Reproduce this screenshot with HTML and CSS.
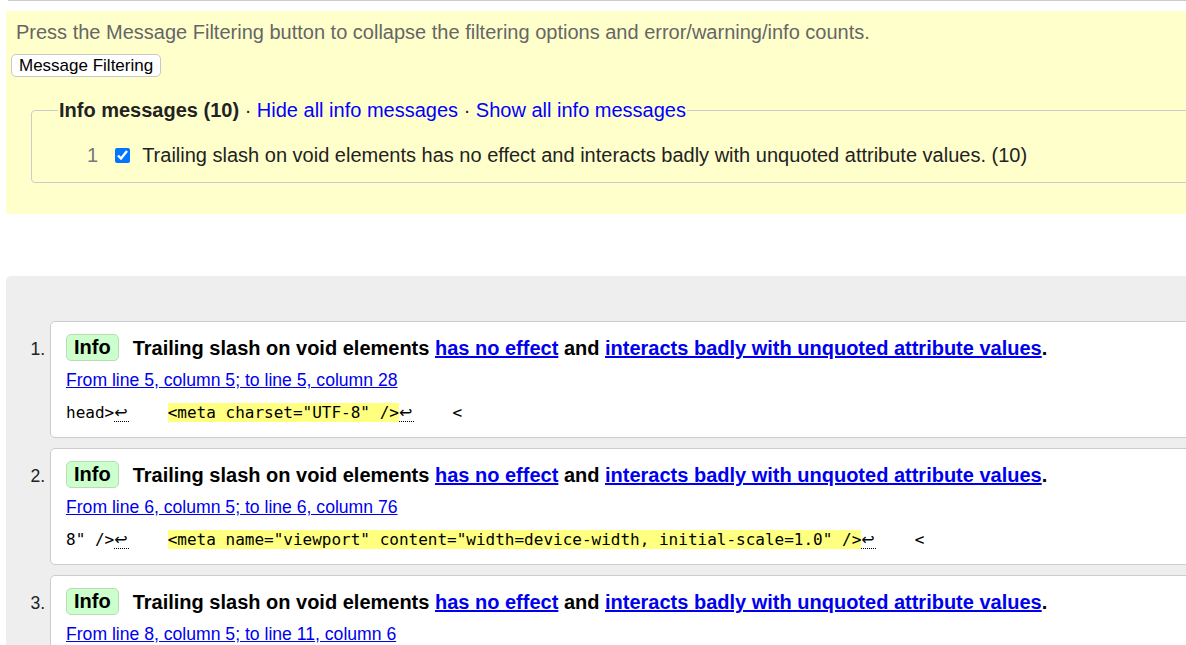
FILE: index.html
```html
<!DOCTYPE html>
<html lang="en">
<head>
<meta charset="utf-8">
<title>Nu Html Checker</title>
<link rel="stylesheet" href="styles.css">
</head>
<body>
<div class="page">
  <div class="topline"></div>
  <section class="filters">
    <p class="hint">Press the Message Filtering button to collapse the filtering options and error/warning/info counts.</p>
    <button class="filter-btn" type="button">Message Filtering</button>
    <fieldset class="group">
      <legend class="group-legend"><strong>Info messages (10)</strong> · <a href="#">Hide all info messages</a> · <a href="#">Show all info messages</a></legend>
      <div class="filter-row">
        <span class="filter-count">1</span>
        <input class="filter-check" type="checkbox" checked>
        <span class="filter-text">Trailing slash on void elements has no effect and interacts badly with unquoted attribute values. (10)</span>
      </div>
    </fieldset>
  </section>

  <section class="results">
    <ol class="messages">
      <li class="msg">
        <p class="msg-head"><span class="badge">Info</span><span class="msg-title">Trailing slash on void elements <a href="#">has no effect</a> and <a href="#">interacts badly with unquoted attribute values</a>.</span></p>
        <p class="msg-loc"><a href="#">From line 5, column 5; to line 5, column 28</a></p>
        <p class="extract"><code>head&gt;<b class="lf" title="Line break">↩</b>    <mark class="hl">&lt;meta charset="UTF-8" /&gt;</mark><b class="lf" title="Line break">↩</b>    &lt;</code></p>
      </li>
      <li class="msg">
        <p class="msg-head"><span class="badge">Info</span><span class="msg-title">Trailing slash on void elements <a href="#">has no effect</a> and <a href="#">interacts badly with unquoted attribute values</a>.</span></p>
        <p class="msg-loc"><a href="#">From line 6, column 5; to line 6, column 76</a></p>
        <p class="extract"><code>8" /&gt;<b class="lf" title="Line break">↩</b>    <mark class="hl">&lt;meta name="viewport" content="width=device-width, initial-scale=1.0" /&gt;</mark><b class="lf" title="Line break">↩</b>    &lt;</code></p>
      </li>
      <li class="msg">
        <p class="msg-head"><span class="badge">Info</span><span class="msg-title">Trailing slash on void elements <a href="#">has no effect</a> and <a href="#">interacts badly with unquoted attribute values</a>.</span></p>
        <p class="msg-loc"><a href="#">From line 8, column 5; to line 11, column 6</a></p>
        <p class="extract"><code>&lt;/title&gt;<b class="lf" title="Line break">↩</b>    <mark class="hl">&lt;link rel="stylesheet" href="styles.css" /&gt;</mark></code></p>
      </li>
    </ol>
  </section>
</div>
</body>
</html>
```

FILE: styles.css
```css
html, body {
  margin: 0;
  padding: 0;
  overflow: hidden;
  background: #fff;
}

body {
  font-family: "Liberation Sans", Arial, sans-serif;
  font-size: 17.6px;
  color: #222;
}

.page {
  width: 1290px;
}

.topline {
  height: 1px;
  background: #ccc;
  margin-left: 8px;
}

.filters {
  margin: 10px 0 0 6px;
  background: #ffc;
  padding: 10px 0 31px 0;
}

.hint {
  margin: 0 0 11px 10px;
  font-size: 20px;
  line-height: 22px;
  color: #666;
}

.filter-btn {
  display: block;
  margin: 0 0 0 5px;
  font-family: "Liberation Sans", Arial, sans-serif;
  font-size: 17px;
  line-height: 19px;
  height: 23px;
  padding: 0 7px;
  background: #fff;
  color: #000;
  border: 1px solid #c8c8c8;
  border-radius: 5px;
}

.group {
  margin: 21px 0 0 25px;
  padding: 21px 0 15px 0;
  border: 1px solid #ccc;
  border-radius: 4px;
}

.group-legend {
  font-size: 20px;
  line-height: 24px;
  padding: 0 1px 0 1px;
  margin-left: 26px;
}

.group-legend strong {
  color: #222;
}

.group-legend a {
  color: #00f;
  text-decoration: none;
}

.filter-row {
  display: flex;
  align-items: center;
  line-height: 24px;
  font-size: 20px;
  padding-left: 55px;
}

.filter-count {
  color: #777;
}

.filter-check {
  width: 15px;
  height: 15px;
  margin: 0 12px 0 17px;
}

.results {
  margin: 62px 0 0 6px;
  background: #eee;
  border-radius: 5px 0 0 0;
  padding: 45px 0 20px 0;
}

.messages {
  margin: 0;
  padding: 0 0 0 44px;
  list-style: decimal outside;
}

.msg {
  background: #fff;
  border: 1px solid #ccc;
  border-radius: 5px;
  padding: 12px 0 13px 15px;
  margin-bottom: 10px;
  font-size: 17.6px;
  color: #222;
}

.msg::marker {
  color: #222;
}

.msg p {
  margin: 0;
}

.msg-head {
  font-size: 20px;
  line-height: 28px;
  font-weight: bold;
  color: #000;
}

.badge {
  display: inline-block;
  background: #cfc;
  border: 1px solid #b7ddb7;
  border-radius: 5px;
  padding: 1px 7px;
  line-height: 23px;
  margin-right: 14px;
  vertical-align: top;
}

.msg-title a {
  color: #00e;
  text-decoration: underline;
}

.msg-loc {
  margin-top: 7px !important;
  line-height: 22px;
}

.msg-loc a {
  color: #00e;
}

.extract {
  margin-top: 10px !important;
  line-height: 22px;
}

.extract code {
  font-family: "DejaVu Sans Mono", monospace;
  font-size: 16px;
  white-space: pre;
  color: #000;
}

.hl {
  background: #ffff80;
  color: #000;
}

.lf {
  display: inline-block;
  width: 15px;
  font-weight: normal;
  font-family: "DejaVu Sans", sans-serif;
  font-size: 16px;
  line-height: 17px;
  border-bottom: 1px dotted #000;
  text-align: left;
}
```
